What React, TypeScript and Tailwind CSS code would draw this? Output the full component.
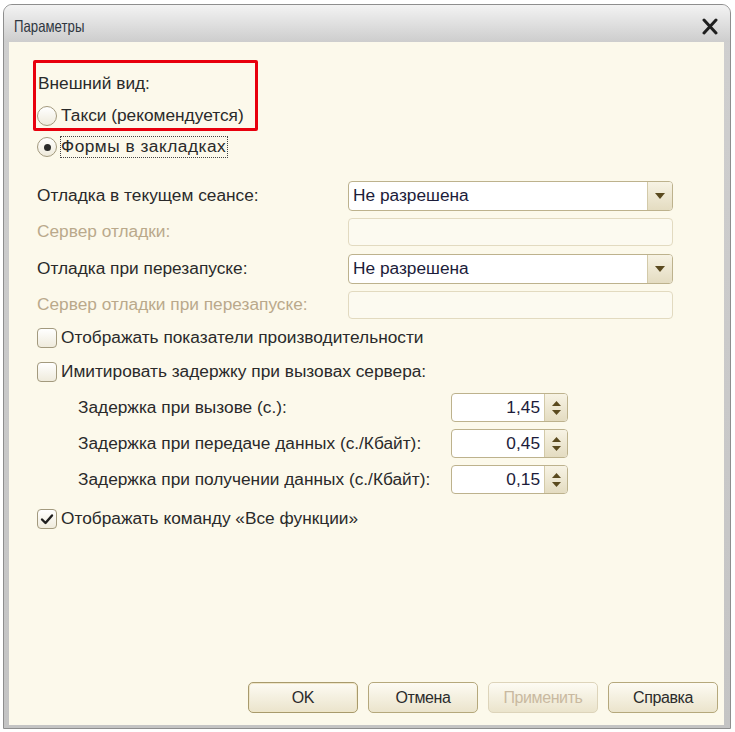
import React from 'react';

const font = { fontFamily: '"Liberation Sans", Arial, sans-serif' };

function Radio({ checked }: { checked?: boolean }) {
  return (
    <span className="flex h-[20px] w-[20px] shrink-0 items-center justify-center rounded-full border border-[#a39a7e] bg-gradient-to-b from-[#ffffff] to-[#eeeadb]">
      {checked && <span className="h-[7px] w-[7px] rounded-full bg-[#2b2b2b]" />}
    </span>
  );
}

function Checkbox({ checked }: { checked?: boolean }) {
  return (
    <span className="flex h-[20px] w-[20px] shrink-0 items-center justify-center rounded-[4px] border border-[#a39a7e] bg-gradient-to-b from-[#ffffff] to-[#efebdc]">
      {checked && (
        <svg width="14" height="12" viewBox="0 0 14 12">
          <path d="M2 6.5 L5.5 10 L12 2.5" fill="none" stroke="#1e1e1e" strokeWidth="2.4" strokeLinecap="round" strokeLinejoin="round" />
        </svg>
      )}
    </span>
  );
}

function Select({ value }: { value: string }) {
  return (
    <div className="flex h-[30px] w-[325px] overflow-hidden rounded-[4px] border border-[#bdb28d] bg-white">
      <div className="flex flex-1 items-center pl-[4px] text-[#1c1c3a]">{value}</div>
      <div className="flex w-[25px] items-center justify-center border-l border-[#d3caa9] bg-gradient-to-b from-[#f7f3e4] to-[#e4dcc1]">
        <svg width="10" height="6" viewBox="0 0 10 6">
          <path d="M0 0 H10 L5 6 Z" fill="#5a4a1f" />
        </svg>
      </div>
    </div>
  );
}

function DisabledInput() {
  return <div className="h-[28px] w-[325px] rounded-[4px] border border-[#e2dac0] bg-[#fcfaf0]" />;
}

function Spin({ value }: { value: string }) {
  return (
    <div className="flex h-[29px] w-[117px] overflow-hidden rounded-[4px] border border-[#bdb28d] bg-white">
      <div className="flex flex-1 items-center justify-end pr-[4px] text-[#1c1c3a]">{value}</div>
      <div className="flex w-[23px] flex-col items-center justify-center gap-[4px] border-l border-[#d3caa9] bg-gradient-to-b from-[#f7f3e4] to-[#e4dcc1]">
        <svg width="9" height="5" viewBox="0 0 9 5">
          <path d="M0 5 H9 L4.5 0 Z" fill="#5a4a1f" />
        </svg>
        <svg width="9" height="5" viewBox="0 0 9 5">
          <path d="M0 0 H9 L4.5 5 Z" fill="#5a4a1f" />
        </svg>
      </div>
    </div>
  );
}

function Button({ label, disabled, primary }: { label: string; disabled?: boolean; primary?: boolean }) {
  return (
    <div
      className={`flex h-[31px] w-[110px] items-center justify-center rounded-[5px] border bg-gradient-to-b from-[#fdfbf3] to-[#ebe4cc] text-[16px] tracking-[-0.4px] ${
        disabled
          ? 'border-[#ddd4ba] text-[#c9b9a0]'
          : primary
            ? 'border-[#a89a6c] text-[#2b2b2b] shadow-[inset_0_0_0_1px_#efe6c8]'
            : 'border-[#b5a87c] text-[#2b2b2b]'
      }`}
    >
      {label}
    </div>
  );
}

export default function App() {
  return (
    <div className="h-[732px] w-[735px] bg-white pl-[3px] pt-[4px]" style={font}>
      <div className="flex h-[725px] w-[728px] flex-col rounded-t-[9px] border border-[#8e8e8e] bg-gradient-to-b from-[#cfcfcf] to-[#c4c4c4] px-[5px] pb-[3px] pr-[6px]">
        {/* Title bar */}
        <div className="flex h-[37px] items-center justify-between rounded-t-[8px] bg-gradient-to-b from-[#f3f3f3] to-[#cdcdcd] -mx-[5px] -mr-[6px] pl-[10px] pr-[12px] pt-[5px]">
          <span className="inline-block origin-left scale-x-[0.8] text-[16.5px] text-[#2f3640]">Параметры</span>
          <svg width="16" height="17" viewBox="0 0 16 17">
            <path d="M2 2 L14 15 M14 2 L2 15" stroke="#1f1f1f" strokeWidth="3" strokeLinecap="round" />
          </svg>
        </div>

        {/* Content */}
        <div className="flex flex-1 flex-col bg-[#fcf9eb] pl-[28px] pt-[18px] text-[17.3px] text-[#2a2a2a]">
          <div className="-ml-[4px] w-[225px] rounded-[2px] border-[3px] border-[#e8000d] pb-0 pl-[1px] pt-[9px]">
            <div className="flex h-[24px] items-center pl-[1px]">Внешний вид:</div>
            <div className="mt-[8px] flex h-[24px] items-center gap-[4px]">
              <Radio />
              <span className="whitespace-nowrap">Такси (рекомендуется)</span>
            </div>
          </div>
          <div className="mt-[4px] flex h-[24px] items-center gap-[3px]">
            <Radio checked />
            <span className="flex h-[22px] items-center border border-dotted border-[#444] pr-[1px] tracking-[0.5px]">Формы в закладках</span>
          </div>

          <div className="mt-[22px] flex items-center">
            <span className="w-[311px]">Отладка в текущем сеансе:</span>
            <Select value="Не разрешена" />
          </div>
          <div className="mt-[7px] flex items-center">
            <span className="w-[311px] text-[#baa98b]">Сервер отладки:</span>
            <DisabledInput />
          </div>
          <div className="mt-[8px] flex items-center">
            <span className="w-[311px]">Отладка при перезапуске:</span>
            <Select value="Не разрешена" />
          </div>
          <div className="mt-[7px] flex items-center">
            <span className="w-[311px] text-[#baa98b]">Сервер отладки при перезапуске:</span>
            <DisabledInput />
          </div>

          <div className="mt-[7px] flex h-[24px] items-center gap-[4px]">
            <Checkbox />
            <span>Отображать показатели производительности</span>
          </div>
          <div className="mt-[10px] flex h-[24px] items-center gap-[4px]">
            <Checkbox />
            <span>Имитировать задержку при вызовах сервера:</span>
          </div>

          <div className="mt-[9px] flex items-center pl-[41px]">
            <span className="w-[373px]">Задержка при вызове (с.):</span>
            <Spin value="1,45" />
          </div>
          <div className="mt-[7px] flex items-center pl-[41px]">
            <span className="w-[373px]">Задержка при передаче данных (с./Кбайт):</span>
            <Spin value="0,45" />
          </div>
          <div className="mt-[7px] flex items-center pl-[41px]">
            <span className="w-[373px]">Задержка при получении данных (с./Кбайт):</span>
            <Spin value="0,15" />
          </div>

          <div className="mt-[13px] flex h-[24px] items-center gap-[4px]">
            <Checkbox checked />
            <span>Отображать команду «Все функции»</span>
          </div>

          <div className="mt-auto flex justify-end gap-[10px] pb-[12px] pr-[6px]">
            <Button label="OK" primary />
            <Button label="Отмена" />
            <Button label="Применить" disabled />
            <Button label="Справка" />
          </div>
        </div>
      </div>
    </div>
  );
}
